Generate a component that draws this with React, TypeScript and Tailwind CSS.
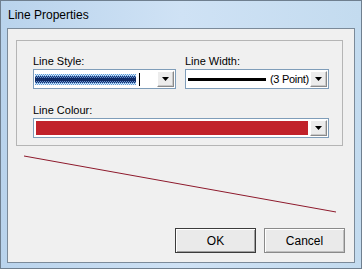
import React from "react";

function Arrow() {
  return (
    <div className="w-[17px] h-[16px] mr-[1px] shrink-0 flex items-center justify-center bg-[#ececec] border border-t-white border-l-white border-r-[#8a8a8a] border-b-[#8a8a8a] shadow-[inset_-1px_-1px_0_#c8c8c8]">
      <svg width="7" height="4" viewBox="0 0 7 4">
        <polygon points="0,0 7,0 3.5,4" fill="#000" />
      </svg>
    </div>
  );
}

function StylePattern() {
  return (
    <svg width="101" height="11" viewBox="0 0 101 11" shapeRendering="crispEdges">
      <defs>
        <pattern id="lt" width="2" height="2" patternUnits="userSpaceOnUse">
          <rect width="2" height="2" fill="#d6e8f8" />
          <rect width="1" height="1" fill="#5c9ad8" />
          <rect x="1" y="1" width="1" height="1" fill="#5c9ad8" />
        </pattern>
        <pattern id="dk" width="2" height="2" patternUnits="userSpaceOnUse">
          <rect width="2" height="2" fill="#14316e" />
          <rect width="1" height="1" fill="#6a95cf" />
          <rect x="1" y="1" width="1" height="1" fill="#6a95cf" />
        </pattern>
      </defs>
      <rect x="0" y="0" width="101" height="2" fill="url(#lt)" />
      <rect x="0" y="2" width="101" height="7" fill="url(#dk)" />
      <rect x="0" y="4" width="101" height="3" fill="#0f2a66" />
      <rect x="0" y="9" width="101" height="2" fill="url(#lt)" />
    </svg>
  );
}

export default function App() {
  const font = { fontFamily: '"Liberation Sans", Arial, sans-serif' };
  return (
    <div
      className="w-[362px] h-[269px] flex flex-col bg-gradient-to-r from-[#b9d3ec] via-[#cfe2f5] to-[#c3dbef] border border-[#6f7f8f] overflow-hidden"
      style={font}
    >
      <div className="h-[27px] flex items-center pl-[7px] text-[12px] text-black shrink-0">
        Line Properties
      </div>
      <div className="flex flex-1 px-[6px] pb-[5px]">
        <div className="flex-1 flex flex-col bg-[#f0f0f0] border border-[#7b8a99] text-[11px] text-black">
          <div className="ml-[8px] mt-[11px] w-[327px] h-[106px] border border-[#b5b5b5] bg-[#f0f0f0] flex flex-col pl-[16px] pt-[13px]">
            <div className="flex gap-[9px]">
              <div className="flex flex-col w-[143px]">
                <div className="h-[14px] leading-[14px]">Line Style:</div>
                <div className="mt-[1px] h-[20px] border border-[#7f9db9] bg-white flex items-center">
                  <div className="ml-[1px] flex-1 flex items-center">
                    <StylePattern />
                    <div className="ml-[3px] w-[1px] h-[13px] bg-black" />
                  </div>
                  <Arrow />
                </div>
              </div>
              <div className="flex flex-col w-[144px]">
                <div className="h-[14px] leading-[14px]">Line Width:</div>
                <div className="mt-[1px] h-[20px] border border-[#7f9db9] bg-white flex items-center">
                  <div className="ml-[2px] flex-1 flex items-center overflow-hidden whitespace-nowrap">
                    <div className="w-[78px] h-[3px] bg-black shrink-0" />
                    <span className="ml-[4px] text-[11px] tracking-[-0.3px]">(3 Point)</span>
                  </div>
                  <Arrow />
                </div>
              </div>
            </div>
            <div className="mt-[14px] flex flex-col w-[296px]">
              <div className="h-[14px] leading-[14px]">Line Colour:</div>
              <div className="mt-[1px] h-[20px] border border-[#7f9db9] bg-white flex items-center">
                <div className="ml-[2px] mr-[2px] flex-1 h-[14px] bg-[#c1222b]" />
                <Arrow />
              </div>
            </div>
          </div>
          <div className="flex-1">
            <svg width="346" height="80" viewBox="0 0 346 80">
              <line x1="16" y1="10" x2="328" y2="66" stroke="#8e1a2c" strokeWidth="1" />
            </svg>
          </div>
          <div className="flex justify-end gap-[8px] pr-[9px] pb-[9px]">
            <button className="w-[81px] h-[25px] bg-[#eaeaea] border border-[#3c3c3c] shadow-[inset_1px_1px_0_#fff,inset_-1px_-1px_0_#a0a0a0] text-[12px]">
              OK
            </button>
            <button className="w-[81px] h-[25px] bg-[#eaeaea] border border-[#8a8a8a] shadow-[inset_1px_1px_0_#fff,inset_-1px_-1px_0_#c0c0c0] text-[12px]">
              Cancel
            </button>
          </div>
        </div>
      </div>
    </div>
  );
}
